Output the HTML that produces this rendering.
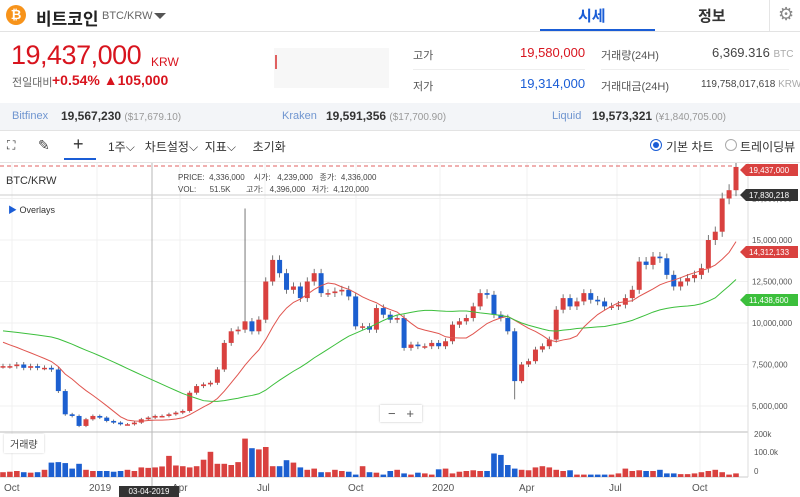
<!DOCTYPE html>
<html><head><meta charset="utf-8"><style>
body{margin:0;width:800px;height:497px;overflow:hidden;font-family:"Liberation Sans","Noto Sans CJK KR",sans-serif;background:#fff;position:relative}
.a{position:absolute;white-space:nowrap}
</style></head><body>
<div class="a" style="left:6px;top:5px;width:20px;height:20px;border-radius:50%;background:#f7931a;color:#fff;font-size:13px;font-weight:bold;text-align:center;line-height:20px">₿</div>
<div class="a" style="left:36px;top:5px;font-size:17px;font-weight:bold;color:#222">비트코인</div>
<div class="a" style="left:102px;top:10px;font-size:11px;color:#666">BTC/KRW</div>
<div class="a" style="left:154px;top:13px;border-left:6px solid transparent;border-right:6px solid transparent;border-top:6px solid #555"></div>
<div class="a" style="left:578px;top:5px;font-size:15px;font-weight:bold;color:#1a5dd6">시세</div>
<div class="a" style="left:540px;top:29px;width:115px;height:3px;background:#1a5dd6"></div>
<div class="a" style="left:698px;top:5px;font-size:15px;font-weight:bold;color:#333">정보</div>
<div class="a" style="left:769px;top:0;width:1px;height:31px;background:#e5e5e5"></div>
<div class="a" style="left:778px;top:4px;font-size:18px;color:#888">⚙</div>
<div class="a" style="left:0;top:31px;width:800px;height:1px;background:#e3e3e3"></div>
<div class="a" style="left:11px;top:40px;font-size:27px;color:#d8141e;letter-spacing:-0.5px">19,437,000</div>
<div class="a" style="left:151px;top:55px;font-size:12px;color:#d8141e">KRW</div>
<div class="a" style="left:12px;top:74px;font-size:11px;color:#666">전일대비</div>
<div class="a" style="left:52px;top:72px;font-size:14px;color:#d8141e;font-weight:bold">+0.54% ▲105,000</div>
<div class="a" style="left:274px;top:48px;width:115px;height:40px;background:#f7f7f7"></div>
<div class="a" style="left:275px;top:55px;width:2px;height:14px;background:#e06060"></div>
<div class="a" style="left:413px;top:47px;font-size:11px;color:#555">고가</div>
<div class="a" style="left:520px;top:45px;font-size:13px;color:#d8141e">19,580,000</div>
<div class="a" style="left:413px;top:78px;font-size:11px;color:#555">저가</div>
<div class="a" style="left:520px;top:76px;font-size:13px;color:#1a5dd6">19,314,000</div>
<div class="a" style="left:413px;top:69px;width:172px;height:1px;background:#eee"></div>
<div class="a" style="left:601px;top:69px;width:188px;height:1px;background:#eee"></div>
<div class="a" style="left:601px;top:47px;font-size:11px;color:#555">거래량(24H)</div>
<div class="a" style="left:712px;top:45px;font-size:13px;color:#444">6,369.316 <span style="font-size:10px;color:#aaa">BTC</span></div>
<div class="a" style="left:601px;top:78px;font-size:11px;color:#555">거래대금(24H)</div>
<div class="a" style="left:701px;top:79px;font-size:10px;color:#444">119,758,017,618 <span style="color:#aaa">KRW</span></div>
<div class="a" style="left:0;top:103px;width:800px;height:27px;background:#f3f5f8"></div>
<div class="a" style="left:12px;top:110px;font-size:11px;color:#6f95d0">Bitfinex</div>
<div class="a" style="left:61px;top:109px;font-size:12px;color:#333;font-weight:bold">19,567,230 <span style="font-size:10px;color:#999;font-weight:normal">($17,679.10)</span></div>
<div class="a" style="left:282px;top:110px;font-size:11px;color:#6f95d0">Kraken</div>
<div class="a" style="left:326px;top:109px;font-size:12px;color:#333;font-weight:bold">19,591,356 <span style="font-size:10px;color:#999;font-weight:normal">($17,700.90)</span></div>
<div class="a" style="left:552px;top:110px;font-size:11px;color:#6f95d0">Liquid</div>
<div class="a" style="left:592px;top:109px;font-size:12px;color:#333;font-weight:bold">19,573,321 <span style="font-size:10px;color:#999;font-weight:normal">(¥1,840,705.00)</span></div>
<div class="a" style="left:0;top:130px;width:800px;height:1px;background:#e3e3e3"></div>
<div class="a" style="left:7px;top:138px;font-size:12px;color:#333">⛶</div>
<div class="a" style="left:38px;top:137px;font-size:14px;color:#444">✎</div>
<div class="a" style="left:73px;top:134px;font-size:18px;color:#333">+</div>
<div class="a" style="left:64px;top:158px;width:32px;height:2px;background:#1a5dd6"></div>
<div class="a" style="left:108px;top:138px;font-size:12px;color:#333">1주⌵&nbsp;&nbsp; 차트설정⌵&nbsp;&nbsp;지표⌵&nbsp;&nbsp;&nbsp;&nbsp; 초기화</div>
<div class="a" style="left:650px;top:139px;width:10px;height:10px;border:1px solid #1a5dd6;border-radius:50%"></div>
<div class="a" style="left:653px;top:142px;width:6px;height:6px;background:#1a5dd6;border-radius:50%"></div>
<div class="a" style="left:666px;top:138px;font-size:12px;color:#333">기본 차트</div>
<div class="a" style="left:725px;top:139px;width:10px;height:10px;border:1px solid #aaa;border-radius:50%"></div>
<div class="a" style="left:740px;top:138px;font-size:12px;color:#333">트레이딩뷰</div>
<div class="a" style="left:0;top:162px;width:800px;height:1px;background:#e3e3e3"></div>
<svg class="a" style="left:0;top:163px" width="800" height="334" id="s" font-family="Liberation Sans, sans-serif"></svg>
<div class="a" style="left:6px;top:175px;font-size:11px;color:#333">BTC/KRW</div>
<div class="a" style="left:178px;top:172px;font-size:8px;color:#444;line-height:12px">PRICE:&nbsp;&nbsp;4,336,000&nbsp;&nbsp;&nbsp;&nbsp;시가:&nbsp;&nbsp;&nbsp;4,239,000&nbsp;&nbsp;&nbsp;종가:&nbsp;&nbsp;4,336,000<br>VOL:&nbsp;&nbsp;&nbsp;&nbsp;&nbsp;&nbsp;51.5K&nbsp;&nbsp;&nbsp;&nbsp;&nbsp;&nbsp;&nbsp;고가:&nbsp;&nbsp;&nbsp;4,396,000&nbsp;&nbsp;&nbsp;저가:&nbsp;&nbsp;4,120,000</div>
<div class="a" style="left:8px;top:203px;font-size:9px;color:#333"><span style="color:#1a5dd6">▶</span> Overlays</div>
<div class="a" style="left:380px;top:405px;width:42px;height:17px;background:#fff;box-shadow:0 0 2px #bbb;font-size:13px;color:#555;text-align:center;line-height:17px">−&nbsp;&nbsp;&nbsp;+</div>
<div class="a" style="left:4px;top:434px;padding:2px 6px;font-size:10px;color:#444;background:#fff;box-shadow:0 0 2px #ccc">거래량</div>
<div class="a" style="left:119px;top:486px;width:60px;height:11px;background:#333;color:#fff;font-size:8px;text-align:center;line-height:11px">03-04-2019</div>
<script>
var P=[7.4,7.4,7.5,7.3,7.4,7.3,7.3,7.2,5.9,4.5,4.4,3.8,4.2,4.4,4.3,4.1,4.0,3.9,3.9,4.0,4.2,4.3,4.4,4.4,4.5,4.6,4.7,5.8,6.2,6.3,6.4,7.2,8.8,9.5,9.6,10.1,9.5,10.2,12.5,13.8,13.0,12.0,12.2,11.5,12.5,13.0,11.8,11.8,11.9,12.0,11.6,9.8,9.8,9.6,10.9,10.5,10.2,10.3,8.5,8.7,8.6,8.6,8.8,8.6,8.9,9.9,10.1,10.3,11.0,11.8,11.7,10.5,10.3,9.5,6.5,7.5,7.7,8.4,8.6,9.0,10.8,11.5,11.0,11.3,11.8,11.4,11.3,11.0,11.0,11.1,11.5,12.0,13.7,13.5,14.0,13.9,12.9,12.2,12.5,12.7,12.9,13.3,15.0,15.5,17.5,18.0,19.4];
var V=[20,22,25,20,18,20,30,60,62,58,35,55,30,25,25,25,22,25,30,25,40,38,40,44,88,48,45,40,45,72,105,55,55,50,62,160,120,115,125,45,45,70,60,40,30,35,20,20,30,25,22,10,45,20,18,10,25,30,15,10,18,15,10,32,35,15,22,25,28,25,25,98,92,50,35,30,28,40,45,40,30,25,28,10,10,10,10,10,10,15,35,25,28,25,25,30,15,15,12,12,15,20,25,30,20,10];
var s=document.getElementById('s'),h='';
var Y=function(p){return 489-163-p*16.6};
[[12,'Oct'],[97,'2019'],[180,'Apr'],[265,'Jul'],[356,'Oct'],[440,'2020'],[527,'Apr'],[617,'Jul'],[700,'Oct']].forEach(function(g){h+='<line x1="'+g[0]+'" y1="0" x2="'+g[0]+'" y2="314" stroke="#f0f0f0"/><text x="'+(g[0]-8)+'" y="328" font-size="10" fill="#555">'+g[1]+'</text>'});
[5,7.5,10,12.5,15,17.5].forEach(function(p){var y=Y(p);h+='<line x1="0" y1="'+y+'" x2="748" y2="'+y+'" stroke="#f0f0f0"/><text x="752" y="'+(y+3)+'" font-size="8" fill="#555">'+(p*1e6).toLocaleString('en-US')+'</text>'});
h+='<line x1="152" y1="0" x2="152" y2="334" stroke="#999" stroke-width="0.7"/>';
h+='<line x1="0" y1="3" x2="735" y2="3" stroke="#e06060" stroke-dasharray="4,3"/>';
h+='<line x1="0" y1="32" x2="748" y2="32" stroke="#ccc"/>';
h+='<line x1="0" y1="269" x2="748" y2="269" stroke="#bbb"/><line x1="0" y1="314" x2="748" y2="314" stroke="#ccc"/><line x1="748" y1="0" x2="748" y2="314" stroke="#ddd"/>';
var n=P.length,dx=(736-3)/(n-1),ma1='',ma2='';
for(var i=0;i<n;i++){var x=3+i*dx,c=P[i],o=i?P[i-1]:7.4,up=c>=o,col=up?'#d9413f':'#1c5fd0';
var hi=Math.max(o,c)*1.02,lo=Math.min(o,c)*0.98;
if(i==74){lo=5.4}if(i==35){hi=16.9}
h+='<line x1="'+x+'" y1="'+Y(hi)+'" x2="'+x+'" y2="'+Y(lo)+'" stroke="#555" stroke-width="0.8"/>';
var t=Y(Math.max(o,c)),b=Y(Math.min(o,c));h+='<rect x="'+(x-2.5)+'" y="'+t+'" width="5" height="'+Math.max(1.5,b-t)+'" fill="'+col+'"/>';
var v=V[i]||15;h+='<rect x="'+(x-2.8)+'" y="'+(314-v*0.24)+'" width="5.6" height="'+(v*0.24)+'" fill="'+col+'"/>';
var a=0;for(var j=i-9;j<=i;j++){a+=j<0?9:P[j];}ma1+=(i?'L':'M')+x+','+Y(a/10);
var b2=0;for(var j=i-29;j<=i;j++){b2+=j<0?(10.5+j*0.06):P[j];}ma2+=(i?'L':'M')+x+','+Y(b2/30);}
h+='<path d="'+ma1+'" fill="none" stroke="#e0554f" stroke-width="1"/><path d="'+ma2+'" fill="none" stroke="#3cbf3c" stroke-width="1"/>';
function tag(y,c,t){h+='<path d="M740,'+(y)+'l6,-6h52v12h-52z" fill="'+c+'"/><text x="749" y="'+(y+3)+'" font-size="8" fill="#fff">'+t+'</text>'}
tag(7,'#d9413f','19,437,000');tag(32,'#333','17,830,218');tag(89,'#d9413f','14,312,133');tag(137,'#3cbf3c','11,438,600');
[[274,'200k'],[292,'100.0k'],[311,'0']].forEach(function(l){h+='<text x="754" y="'+l[0]+'" font-size="8" fill="#555">'+l[1]+'</text>'});
s.innerHTML=h;
</script>
</body></html>
